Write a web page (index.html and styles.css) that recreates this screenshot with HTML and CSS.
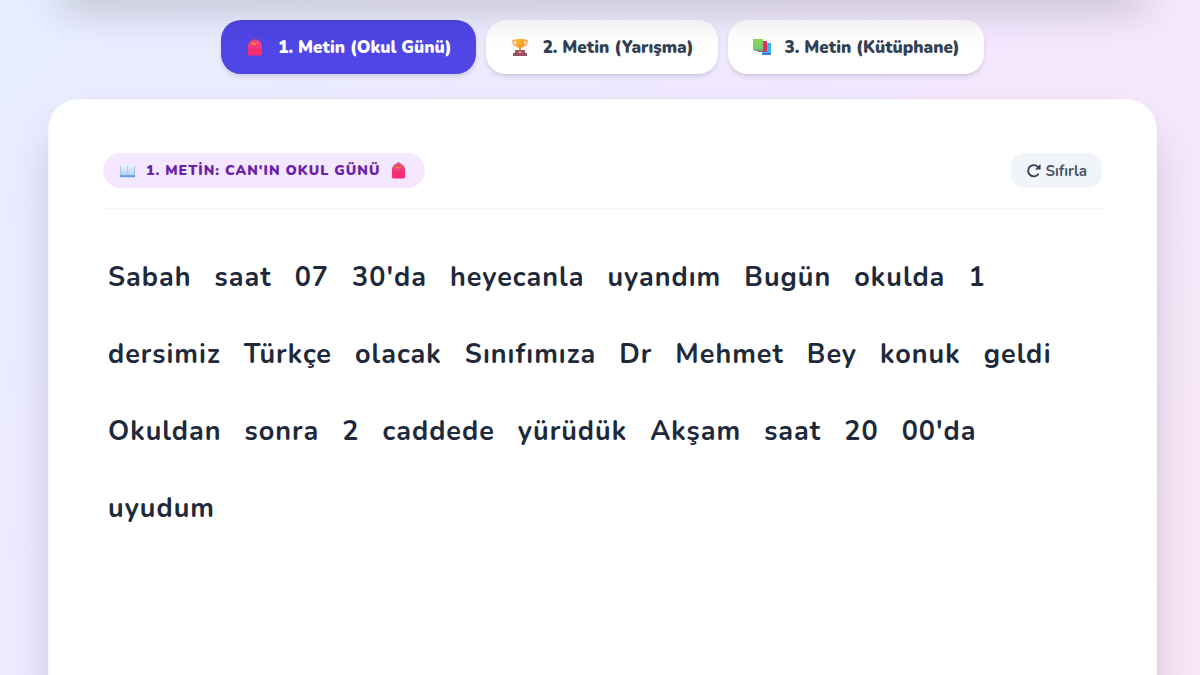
FILE: index.html
```html
<!DOCTYPE html>
<html lang="tr">
<head>
    <meta charset="UTF-8">
    <meta name="viewport" content="width=device-width, initial-scale=1.0">
    <title>Okul Günü</title>
    <link rel="stylesheet" href="styles.css">
</head>
<body>
    <svg class="defs" aria-hidden="true">
        <defs>
            <linearGradient id="pink" x1="0" y1="0" x2="0" y2="1">
                <stop offset="0" stop-color="#e8497f"/>
                <stop offset="1" stop-color="#ff2570"/>
            </linearGradient>
            <linearGradient id="gold" x1="0" y1="0" x2="1" y2="1">
                <stop offset="0" stop-color="#ffc43d"/>
                <stop offset="1" stop-color="#f28a22"/>
            </linearGradient>
            <linearGradient id="green" x1="0" y1="0" x2="0" y2="1">
                <stop offset="0" stop-color="#93d852"/>
                <stop offset="1" stop-color="#6fc979"/>
            </linearGradient>
            <linearGradient id="page" x1="0" y1="0" x2="0" y2="1">
                <stop offset="0" stop-color="#f3f3fa"/>
                <stop offset="1" stop-color="#b5d3f2"/>
            </linearGradient>
            <symbol id="bag" viewBox="0 0 18 18">
                <path d="M6.500 3C7 .2 11 .2 11.500 3" fill="none" stroke="#a9345f" stroke-width="1"/>
                <path d="M2 9C2 4 5 1.500 9 1.500S16 4 16 9V16Q16 17.500 14.500 17.500H3.500Q2 17.500 2 16Z" fill="url(#pink)"/>
                <path d="M4 10.500Q9 14 14 10.500" fill="none" stroke="#d92a68" stroke-width="1"/>
                <path d="M6.500 4V6.500M11.500 4V6.500" stroke="#f9883f" stroke-width="1"/>
                <path d="M7 6H10" stroke="#ffa03b" stroke-width="1.500"/>
            </symbol>
            <symbol id="cup" viewBox="0 0 18 18">
                <path d="M5 2.500H2Q2 8 6.500 8M13 2.500H16Q16 8 11.500 8" fill="none" stroke="#f0a850" stroke-width="1.500"/>
                <path d="M4.500 1H13.500V5Q13.500 9.500 10 10V13H8V10Q4.500 9.500 4.500 5Z" fill="url(#gold)"/>
                <path d="M4 12H14V15H16V18H2V15H4Z" fill="#9b5068"/>
                <path d="M7.500 13.500H10.500V15H7.500Z" fill="#e7a35e"/>
            </symbol>
            <symbol id="books" viewBox="0 0 18 18">
                <path d="M10 5H18V17H9V15Z" fill="#35b5ef"/>
                <path d="M9 15H18V17H9Z" fill="#4a78d8"/>
                <path d="M6 3H14V14H5V12Z" fill="#df3268"/>
                <path d="M5 12H12V14H5Z" fill="#a34b78"/>
                <path d="M0 1H10V12H0Z" fill="url(#green)"/>
                <path d="M0 11H10V13H2Z" fill="#75aa70"/>
            </symbol>
            <symbol id="book" viewBox="0 0 18 18">
                <path d="M1 4H17V16H1Z" fill="#9cc4ea"/>
                <path d="M2 3Q6 2 9 4.500Q12 2 16 3V14H2Z" fill="url(#page)"/>
                <path d="M9 4.500V14" stroke="#b6cbe4" stroke-width="1"/>
                <path d="M1 14H17V16H1Z" fill="#5d9edb"/>
            </symbol>
        </defs>
    </svg>

    <header class="top-panel"></header>

    <main class="page">
        <nav class="tabs">
            <button class="tab active"><svg class="emoji"><use href="#bag"/></svg>1. Metin (Okul Günü)</button>
            <button class="tab"><svg class="emoji"><use href="#cup"/></svg>2. Metin (Yarışma)</button>
            <button class="tab"><svg class="emoji"><use href="#books"/></svg>3. Metin (Kütüphane)</button>
        </nav>

        <section class="card">
            <div class="card-head">
                <h2 class="badge"><svg class="emoji"><use href="#book"/></svg><span>1. METİN: CAN'IN OKUL GÜNÜ</span><svg class="emoji"><use href="#bag"/></svg></h2>
                <button class="reset">
                    <svg viewBox="0 0 16 16"><path d="M13 12A6 6 0 1 1 12.500 4" fill="none" stroke="currentColor" stroke-width="2" stroke-linecap="round"/><path d="M15.500 1V7H9.500Z" fill="currentColor"/></svg>
                    Sıfırla
                </button>
            </div>
            <div class="words">
                <span>Sabah</span><span>saat</span><span>07</span><span>30'da</span><span>heyecanla</span><span>uyandım</span><span>Bugün</span><span>okulda</span><span>1</span>
                <span>dersimiz</span><span>Türkçe</span><span>olacak</span><span>Sınıfımıza</span><span>Dr</span><span>Mehmet</span><span>Bey</span><span>konuk</span><span>geldi</span>
                <span>Okuldan</span><span>sonra</span><span>2</span><span>caddede</span><span>yürüdük</span><span>Akşam</span><span>saat</span><span>20</span><span>00'da</span>
                <span>uyudum</span>
            </div>
        </section>
    </main>
</body>
</html>
```
FILE: styles.css
```css
* {
    box-sizing: border-box;
}
body {
    margin: 0;
    height: 100vh;
    overflow: hidden;
    font-family: 'Nunito', 'Open Sans', sans-serif;
    color: #1e293b;
    background: linear-gradient(135deg, #e7eeff 0%, #f3e8ff 50%, #fce7f3 110%);
    background-size: 100% 120%;
}
.defs {
    position: absolute;
    width: 0;
    height: 0;
}
.top-panel {
    position: relative;
    z-index: 2;
    height: 40px;
    margin: -41px 43px 1px 48px;
    border-radius: 30px;
    box-shadow: 0 16px 40px -10px rgba(0, 0, 0, 0.3);
}
.page {
    padding: 20px 43px 0 48px;
}
.tabs {
    display: flex;
    justify-content: center;
    gap: 10px;
    margin-bottom: 25px;
}
button {
    font-family: inherit;
    border: none;
    cursor: pointer;
}
.emoji {
    width: 18px;
    height: 18px;
    flex: none;
}
.tab {
    display: flex;
    align-items: center;
    gap: 14px;
    height: 54px;
    padding: 0 24px 0 25px;
    border-radius: 20px;
    background: white;
    color: #334155;
    font-size: 17px;
    font-weight: 900;
    box-shadow: 0 4px 6px -1px rgba(0, 0, 0, 0.1), 0 2px 4px -2px rgba(0, 0, 0, 0.1);
}
.tab.active {
    background: #4f46e5;
    color: white;
}
.card {
    min-height: 100vh;
    padding: 53px 54px;
    border: 1px solid #f8f8fc;
    border-radius: 30px;
    background: white;
    box-shadow: 0 25px 50px -12px rgba(0, 0, 0, 0.25);
}
.card-head {
    display: flex;
    justify-content: space-between;
    align-items: center;
    padding-bottom: 20px;
    border-bottom: 1px solid #f1f5f9;
    margin-bottom: 30px;
}
.badge {
    display: flex;
    align-items: center;
    gap: 10px;
    height: 35px;
    margin: 0;
    padding: 0 18px 0 16px;
    border-radius: 18px;
    background: #f3e8ff;
    color: #6b21a8;
    font-size: 14px;
    font-weight: 900;
    letter-spacing: 1px;
}
.badge .emoji {
    width: 17px;
    height: 17px;
}
.reset {
    display: flex;
    align-items: center;
    gap: 5px;
    height: 35px;
    padding: 0 15px;
    border-radius: 14px;
    background: #f1f5f9;
    color: #475569;
    font-size: 15px;
    font-weight: 700;
}
.reset svg {
    width: 15px;
    height: 15px;
    color: #334155;
}
.words {
    display: flex;
    flex-wrap: wrap;
    column-gap: 13px;
    font-size: 27px;
    font-weight: 700;
    line-height: 77px;
    letter-spacing: 1px;
}
.words span {
    padding: 0 5px;
}
```
